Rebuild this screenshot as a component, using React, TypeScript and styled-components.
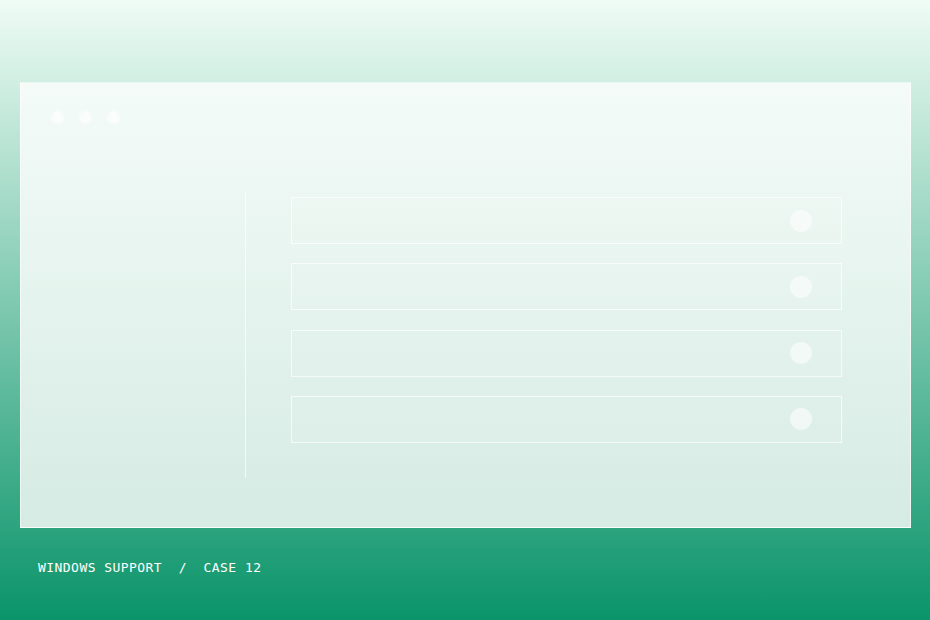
import React from 'react';
import styled, { createGlobalStyle } from 'styled-components';

const GlobalStyle = createGlobalStyle`
  html, body {
    margin: 0;
    padding: 0;
  }
  body {
    font-family: "DejaVu Sans", sans-serif;
  }
`;

// Full page with the mint-to-green backdrop
const Page = styled.div`
  width: 930px;
  height: 620px;
  box-sizing: border-box;
  padding: 82px 19px 0 20px;
  background: linear-gradient(180deg, #effcf5 0%, #0a9469 100%);
  display: flex;
  flex-direction: column;
  overflow: hidden;
`;

const Window = styled.div`
  height: 446px;
  box-sizing: border-box;
  border: 1px solid rgba(255, 255, 255, 0.55);
  background: linear-gradient(180deg, #f4fbf8 0%, #d5ebe3 100%);
  display: flex;
  flex-direction: column;
`;

const TitleBar = styled.div`
  height: 110px;
  box-sizing: border-box;
  padding: 28px 0 0 30px;
  display: flex;
  gap: 15px;
`;

const Dot = styled.span`
  width: 13px;
  height: 13px;
  border-radius: 50%;
  background: rgba(255, 255, 255, 0.65);
  filter: blur(1px);
`;

const Body = styled.div`
  display: grid;
  grid-template-columns: 225px 1fr;
`;

const Sidebar = styled.div`
  height: 285px;
  border-right: 1px solid rgba(255, 255, 255, 0.7);
`;

const List = styled.div`
  padding: 4px 68px 0 45px;
  display: flex;
  flex-direction: column;
  gap: 19.33px;
`;

const Row = styled.div`
  height: 47px;
  box-sizing: border-box;
  border: 1px solid rgba(255, 255, 255, 0.7);
  background: rgba(255, 255, 255, 0.06);
  display: flex;
  align-items: center;
  justify-content: flex-end;
  padding-right: 29px;
`;

const Knob = styled.span`
  width: 22px;
  height: 22px;
  border-radius: 50%;
  background: rgba(255, 255, 255, 0.55);
  filter: blur(0.7px);
`;

const Footer = styled.div`
  padding: 32px 0 0 18px;
  font-family: "DejaVu Sans Mono", "Liberation Mono", monospace;
  font-size: 13px;
  letter-spacing: 0.45px;
  color: #ffffff;
  white-space: pre;
`;

export default function App() {
  const rows = [0, 1, 2, 3];
  return (
    <>
      <GlobalStyle />
      <Page>
        <Window>
          <TitleBar>
            <Dot />
            <Dot />
            <Dot />
          </TitleBar>
          <Body>
            <Sidebar />
            <List>
              {rows.map((r) => (
                <Row key={r}>
                  <Knob />
                </Row>
              ))}
            </List>
          </Body>
        </Window>
        <Footer>{'WINDOWS SUPPORT  /  CASE 12'}</Footer>
      </Page>
    </>
  );
}
